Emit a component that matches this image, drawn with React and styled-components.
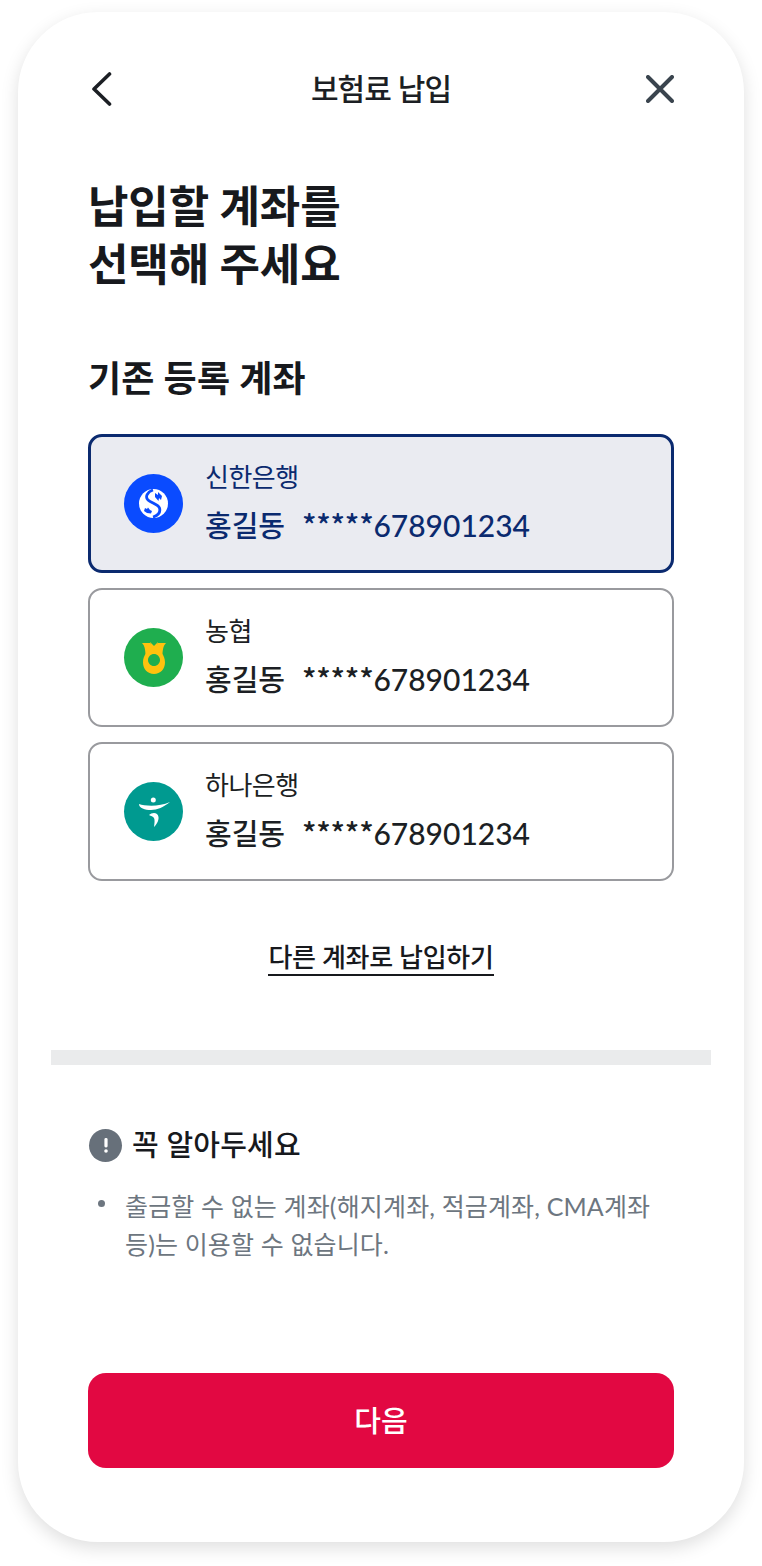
import React from 'react';
import styled, { createGlobalStyle } from 'styled-components';

const GlobalStyle = createGlobalStyle`
    html, body {
        margin: 0;
        padding: 0;
        background: #fff;
    }
    body {
        font-family: Lato, "Noto Sans CJK KR", sans-serif;
    }
`;

const Page = styled.div`
    width: 762px;
    height: 1566px;
    padding: 12px 18px 24px;
    box-sizing: border-box;
    overflow: hidden;
`;

const Phone = styled.div`
    width: 726px;
    height: 1530px;
    box-sizing: border-box;
    padding: 0 70px;
    display: flex;
    flex-direction: column;
    background: #fff;
    border-radius: 80px;
    box-shadow: 0 6px 18px rgba(0, 0, 0, 0.13);
`;

const Header = styled.header`
    height: 54px;
    margin-top: 50px;
    display: grid;
    grid-template-columns: 1fr auto 1fr;
    align-items: center;
`;

const HeaderTitle = styled.h1`
    margin: 0;
    padding-bottom: 4px;
    font-size: 30px;
    font-weight: 500;
    letter-spacing: -0.9px;
    color: #1c1f24;
`;

const CloseSlot = styled.div`
    display: flex;
    justify-content: flex-end;
`;

const Title = styled.h2`
    margin: 61px 0 0;
    font-size: 44px;
    line-height: 58px;
    font-weight: 700;
    letter-spacing: -0.15px;
    color: #17191d;
`;

const SectionTitle = styled.h3`
    margin: 62px 0 0;
    font-size: 36px;
    line-height: 46px;
    font-weight: 700;
    letter-spacing: 0.2px;
    color: #17191d;
`;

const AccountList = styled.div`
    margin-top: 33px;
    display: flex;
    flex-direction: column;
    gap: 15px;
`;

const AccountCard = styled.div`
    height: 139px;
    box-sizing: border-box;
    display: flex;
    align-items: center;
    gap: 22px;
    padding-left: ${(p) => (p.$selected ? '33px' : '34px')};
    border: ${(p) => (p.$selected ? '3px solid #0b2a6f' : '2px solid #999a9e')};
    border-radius: 14px;
    background: ${(p) => (p.$selected ? '#eaebf1' : '#fff')};
    color: ${(p) => (p.$selected ? '#0b2a6f' : '#1c1f24')};
`;

const BankLogo = styled.span`
    width: 59px;
    height: 59px;
    flex: none;
    display: flex;
    align-items: center;
    justify-content: center;
    border-radius: 50%;
    background: ${(p) => p.$color};
`;

const AccountText = styled.div`
    display: flex;
    flex-direction: column;
    gap: 9px;
    padding-bottom: 3px;
`;

const BankName = styled.span`
    font-size: 26px;
    line-height: 36px;
    letter-spacing: -0.5px;
`;

const AccountRow = styled.div`
    display: flex;
    align-items: baseline;
    gap: 17px;
    line-height: 40px;
    font-weight: 500;
`;

const HolderName = styled.span`
    font-size: 29px;
`;

const AccountNumber = styled.span`
    font-size: 30px;
`;

const Mask = styled.span`
    font-family: "Noto Sans CJK KR", sans-serif;
    letter-spacing: -0.25px;
`;

const LinkRow = styled.div`
    margin-top: 60px;
    display: flex;
    justify-content: center;
`;

const OtherLink = styled.a`
    font-size: 26px;
    line-height: 33px;
    font-weight: 500;
    letter-spacing: -0.3px;
    color: #17191d;
    border-bottom: 2px solid #17191d;
`;

const Divider = styled.div`
    height: 15px;
    margin: 74px -37px 0;
    background: #eaebec;
`;

const NoticeTitle = styled.div`
    margin: 60px 0 0 1px;
    display: flex;
    align-items: center;
    gap: 10px;
    font-size: 29px;
    line-height: 40px;
    font-weight: 500;
    letter-spacing: 0.2px;
    color: #17191d;
`;

const NoticeIcon = styled.span`
    width: 33px;
    height: 33px;
    flex: none;
    display: flex;
    align-items: center;
    justify-content: center;
    border-radius: 50%;
    background: #67707a;
`;

const NoticeList = styled.ul`
    margin: 22px 0 0;
    padding: 0 0 0 37px;
    list-style: none;
`;

const NoticeItem = styled.li`
    position: relative;
    font-size: 25px;
    line-height: 38px;
    letter-spacing: 0.15px;
    color: #6d7680;

    &::before {
        content: '';
        position: absolute;
        left: -27px;
        top: 13px;
        width: 7px;
        height: 7px;
        border-radius: 50%;
        background: #6d7680;
    }
`;

const NextButton = styled.button`
    height: 95px;
    margin-top: auto;
    margin-bottom: 74px;
    padding-bottom: 5px;
    border: none;
    border-radius: 18px;
    background: #e20842;
    color: #fff;
    font-family: inherit;
    font-size: 29px;
    font-weight: 500;
`;

const BackIcon = () => (
    <svg width="24" height="36" viewBox="0 0 24 36" fill="none">
        <path d="M21.5 3 L6 18 L21.5 33" stroke="#1c1f24" strokeWidth="3.6" strokeLinecap="round" strokeLinejoin="round" />
    </svg>
);

const CloseIcon = () => (
    <svg width="28" height="28" viewBox="0 0 28 28" fill="none">
        <path d="M2 2 L26 26 M26 2 L2 26" stroke="#3a444e" strokeWidth="4" strokeLinecap="round" />
    </svg>
);

const ShinhanMark = () => (
    <svg width="29" height="29" viewBox="0 0 29 29">
        <circle cx="14.5" cy="14.5" r="14.5" fill="#fff" />
        <path d="M14 1 C8 3 6 8 9 11 C12 14 19 15 20.5 19 C22 24 18 27 14 28" fill="none" stroke="#0a4bff" strokeWidth="2.8" />
        <path d="M16 4 L19 6 L19 3 L23 7 L22 11 L20 9 L19.5 12 L16 8 Z" fill="#0a4bff" />
        <path d="M6 19 L8 20 L9 18.5 L11 21 L13 22 L12 24.5 L8 24 L5 22 Z" fill="#0a4bff" />
    </svg>
);

const NonghyupMark = () => (
    <svg width="24" height="32" viewBox="0 0 24 32">
        <path
            fillRule="evenodd"
            d="M12 8 C18.5 8 23 13 23 20.5 C23 27 18.5 32 12 32 C5.5 32 1 27 1 20.5 C1 13 5.5 8 12 8 Z M12 12 C8.7 12 6 14.7 6 18 C6 21.3 8.7 24 12 24 C15.3 24 18 21.3 18 18 C18 14.7 15.3 12 12 12 Z"
            fill="#ffc20e"
        />
        <path d="M0 1 L8 1 L12 7 L11.5 10 C8 10 5.5 11 3.5 14 C3.5 9 3 4 0 1 Z" fill="#ffc20e" />
        <path d="M24 1 L16 1 L12 7 L12.5 10 C16 10 18.5 11 20.5 14 C20.5 9 21 4 24 1 Z" fill="#ffc20e" />
        <path d="M8 0 L12 4 L16 0 L15 5 L12 9 L9 5 Z" fill="#ffc20e" />
    </svg>
);

const HanaMark = () => (
    <svg width="34" height="34" viewBox="0 0 34 34">
        <circle cx="16.3" cy="5" r="2.5" fill="#fff" />
        <path d="M2 9 C8 11 22 12 33 7 C27 12 20 15 14 15 C8 15 2 13 2 9 Z" fill="#fff" />
        <path d="M12 20 C15 17 21 17 21.5 22 C22 26 19 30 17 32 C17.5 28 18 25 17 23 C16 21.5 14 21 12 20 Z" fill="#fff" />
    </svg>
);

const accounts = [
    { bank: '신한은행', color: '#0a4bff', Mark: ShinhanMark, selected: true },
    { bank: '농협', color: '#1fae4f', Mark: NonghyupMark },
    { bank: '하나은행', color: '#009a90', Mark: HanaMark },
];

const App = () => (
    <Page>
        <GlobalStyle />
        <Phone>
            <Header>
                <BackIcon />
                <HeaderTitle>보험료 납입</HeaderTitle>
                <CloseSlot>
                    <CloseIcon />
                </CloseSlot>
            </Header>
            <Title>
                납입할 계좌를
                <br />
                선택해 주세요
            </Title>
            <SectionTitle>기존 등록 계좌</SectionTitle>
            <AccountList>
                {accounts.map(({ bank, color, Mark, selected }) => (
                    <AccountCard key={bank} $selected={selected}>
                        <BankLogo $color={color}>
                            <Mark />
                        </BankLogo>
                        <AccountText>
                            <BankName>{bank}</BankName>
                            <AccountRow>
                                <HolderName>홍길동</HolderName>
                                <AccountNumber>
                                    <Mask>*****</Mask>678901234
                                </AccountNumber>
                            </AccountRow>
                        </AccountText>
                    </AccountCard>
                ))}
            </AccountList>
            <LinkRow>
                <OtherLink>다른 계좌로 납입하기</OtherLink>
            </LinkRow>
            <Divider />
            <NoticeTitle>
                <NoticeIcon>
                    <svg width="6" height="15" viewBox="0 0 6 15">
                        <rect x="1.4" y="0" width="3.2" height="9.5" rx="1.4" fill="#fff" />
                        <circle cx="3" cy="13" r="1.8" fill="#fff" />
                    </svg>
                </NoticeIcon>
                꼭 알아두세요
            </NoticeTitle>
            <NoticeList>
                <NoticeItem>출금할 수 없는 계좌(해지계좌, 적금계좌, CMA계좌 등)는 이용할 수 없습니다.</NoticeItem>
            </NoticeList>
            <NextButton>다음</NextButton>
        </Phone>
    </Page>
);

export default App;
